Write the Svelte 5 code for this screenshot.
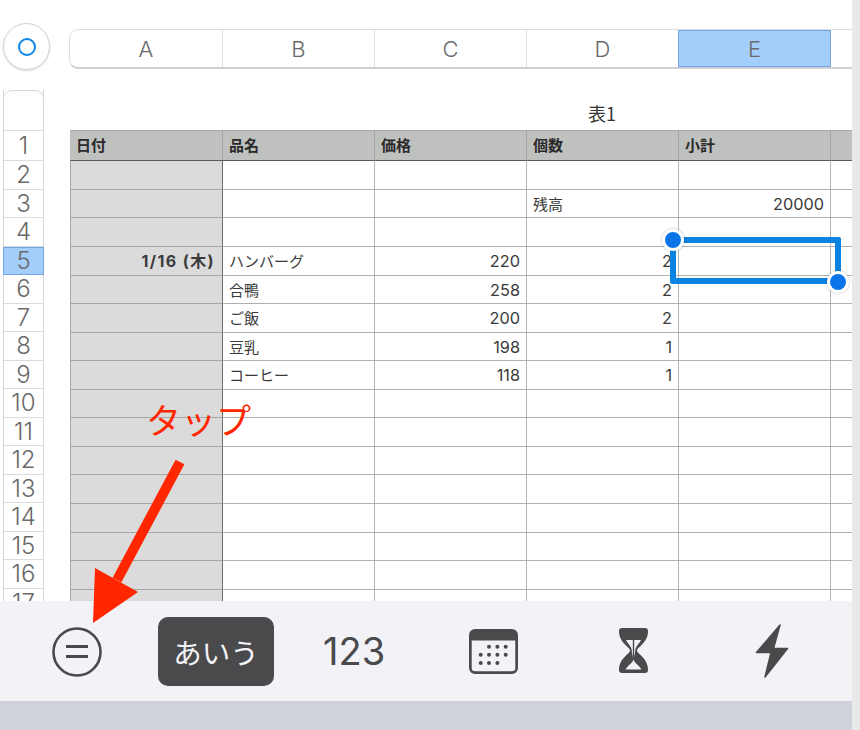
<script>
  const columns = ['A', 'B', 'C', 'D', 'E']
  const heads = ['日付', '品名', '価格', '個数', '小計', '']
  const rowNumbers = Array.from({ length: 17 }, (_, i) => i + 1)

  // filled rows of the sheet, row number -> cells
  const filled = {
    3: ['', '', '', '残高', '20000', ''],
    5: ['1/16 (木)', 'ハンバーグ', '220', '2', '', ''],
    6: ['', '合鴨', '258', '2', '', ''],
    7: ['', 'ご飯', '200', '2', '', ''],
    8: ['', '豆乳', '198', '1', '', ''],
    9: ['', 'コーヒー', '118', '1', '', '']
  }
  const bodyRows = rowNumbers.slice(1).map((n) => filled[n] ?? ['', '', '', '', '', ''])
  const isNum = (v) => /^[\d/]/.test(v)

  const calDots = [
    [20, 17.7], [28.4, 17.7], [36.7, 17.7],
    [11.7, 25.7], [20, 25.7], [28.4, 25.7], [36.7, 25.7],
    [11.7, 34], [20, 34], [28.4, 34]
  ]
</script>

<div class="page">
  <div class="screen">
    <div class="sheet-area">
      <div class="top">
        <div class="corner"><span class="ring"></span></div>
        <div class="col-heads">
          {#each columns as c, i}
            <div class="col-head" class:active={i === 4}>{c}</div>
          {/each}
        </div>
      </div>

      <div class="sheet">
        <div class="gutter">
          <div class="gutter-top"></div>
          {#each rowNumbers as n}
            <div class="row-no" class:active={n === 5}>{n}</div>
          {/each}
        </div>

        <div class="table-wrap">
          <div class="title">表1</div>
          <div class="grid head-row">
            {#each heads as h}
              <div class="cell head">{h}</div>
            {/each}
          </div>
          {#each bodyRows as row, r}
            <div class="grid" class:under-head={r === 0}>
              {#each row as v, i}
                <div class="cell" class:first={i === 0} class:num={isNum(v)}>{v}</div>
              {/each}
            </div>
          {/each}

          <div class="selection">
            <span class="knob tl"></span>
            <span class="knob br"></span>
          </div>
        </div>
      </div>
    </div>

    <div class="toolbar">
      <svg class="tool eq" width="50" height="50" viewBox="0 0 50 50" fill="none" stroke="#4a4a4c">
        <circle cx="25" cy="25" r="23.5" stroke-width="2.6" />
        <path d="M14 19.5h22M14 29.5h22" stroke-width="2.8" />
      </svg>
      <div class="kana">あいう</div>
      <div class="digits">123</div>
      <svg class="tool cal" width="49" height="45" viewBox="0 0 49 45" fill="#4a4a4c">
        <path fill-rule="evenodd" d="M6 0h37a6 6 0 0 1 6 6v33a6 6 0 0 1-6 6H6a6 6 0 0 1-6-6V6a6 6 0 0 1 6-6ZM2.700 11.500V39A3.300 3.300 0 0 0 6 42.300h37a3.300 3.300 0 0 0 3.300-3.300V11.500Z" />
        {#each calDots as [x, y]}
          <circle cx={x} cy={y} r="2" />
        {/each}
      </svg>
      <svg class="tool glass" width="29" height="45" viewBox="0 0 29 45" fill="#4a4a4c">
        <path fill-rule="evenodd" d="M3 0H26C28 0 29 1 29 3C29 9 26.500 13 22.500 17C19.500 20 18 21 18 22.500C18 24 19.500 25 22.500 28C26.500 32 29 36 29 42C29 44 28 45 26 45H3C1 45 0 44 0 42C0 36 2.500 32 6.500 28C9.500 25 11 24 11 22.500C11 21 9.500 20 6.500 17C2.500 13 0 9 0 3C0 1 1 0 3 0ZM7 12C8.500 15 12.800 19 12.800 22.500C12.800 25 13.500 27 13.800 30V12ZM22 12C20.500 15 16.200 19 16.200 22.500C16.200 25 15.500 27 15.200 30V12ZM14.500 31C14 35 9 37 6.500 41.500H22.500C20 37 15 35 14.500 31Z" />
      </svg>
      <svg class="tool bolt" width="34" height="54" viewBox="0 0 34 54" fill="#4a4a4c" stroke="#4a4a4c" stroke-width="1.500" stroke-linejoin="round">
        <path d="M25 1L1.500 28.500H16L10 53L32.500 24.500H18.500Z" />
      </svg>
    </div>
    <div class="keyboard-edge"></div>

    <div class="note">タップ</div>
    <svg class="arrow" width="100" height="170" viewBox="0 0 100 170">
      <path d="M90 2L27 120" stroke="#ff2600" stroke-width="10" fill="none" />
      <path d="M3 163L5 108L48 132Z" fill="#ff2600" />
    </svg>
  </div>
  <div class="edge"></div>
</div>

<style>
  :global(body) {
    margin: 0;
    background: #fff;
  }

  .page {
    display: flex;
    width: 860px;
    height: 730px;
    overflow: hidden;
    font-family: "Noto Sans CJK JP", "Liberation Sans", sans-serif;
  }
  .screen {
    position: relative;
    display: flex;
    flex-direction: column;
    width: 852px;
    flex-shrink: 0;
  }
  .edge {
    flex: 1;
    background: #e8e9e9;
  }

  /* ── Sheet ── */
  .sheet-area {
    height: 601px;
    overflow: hidden;
    background: #fff;
    flex-shrink: 0;
  }
  .top {
    display: flex;
    padding: 23px 0 0 3px;
    gap: 20px;
  }
  .corner {
    display: flex;
    align-items: center;
    justify-content: center;
    width: 45px;
    height: 45px;
    border: 1px solid #d0d0d0;
    border-radius: 50%;
    box-shadow: 0 1px 2px rgba(0, 0, 0, .16);
    flex-shrink: 0;
  }
  .ring {
    width: 14px;
    height: 14px;
    border: 2px solid #0a84e8;
    border-radius: 50%;
  }
  .col-heads {
    display: flex;
    flex: 1;
    height: 37px;
    margin-top: 6px;
    margin-left: -1px;
    border: 1px solid #dcdcdc;
    border-right: 0;
    border-bottom: 2px solid #d0d0d0;
    border-radius: 9px 0 0 9px;
    overflow: hidden;
  }
  .col-head {
    display: flex;
    align-items: center;
    justify-content: center;
    width: 152px;
    box-sizing: border-box;
    border-right: 1px solid #dcdcdc;
    color: #6a6a6a;
    font-family: Inter, "Liberation Sans", sans-serif;
    font-size: 22px;
    font-weight: 350;
    flex-shrink: 0;
  }
  .col-head:first-child {
    width: 153px;
  }
  .col-head.active {
    width: 153px;
    margin-left: -1px;
    background: #a3cdfb;
    border: 1px solid #74a6e4;
  }

  .sheet {
    display: flex;
    margin-top: 20px;
    padding-left: 3px;
  }
  .gutter {
    width: 41px;
    box-sizing: border-box;
    flex-shrink: 0;
    border: 1px solid #d6d6d6;
    border-top: 0;
    border-bottom: 0;
  }
  .gutter-top {
    height: 41px;
    margin: 0 -1px;
    border: 1px solid #d6d6d6;
    border-bottom: 1px solid #dcdcdc;
    border-radius: 9px 9px 0 0;
    box-sizing: border-box;
  }
  .row-no {
    display: flex;
    align-items: center;
    justify-content: center;
    height: 28.5px;
    box-sizing: border-box;
    border-bottom: 1px solid #dcdcdc;
    color: #6a6a6a;
    font-family: Inter, "Liberation Sans", sans-serif;
    font-size: 24px;
    font-weight: 350;
  }
  .row-no:nth-child(2) {
    height: 30px;
  }
  .row-no.active {
    background: #a3cdfb;
    margin: 0 -1px;
    border: 1px solid #74a6e4;
  }

  .table-wrap {
    position: relative;
    margin-left: 26px;
    width: 791px;
    flex-shrink: 0;
  }
  .title {
    height: 40px;
    box-sizing: border-box;
    padding-left: 456px;
    width: 608px;
    text-align: center;
    color: #333;
    font-size: 18px;
    line-height: 46px;
  }
  .grid {
    display: grid;
    grid-template-columns: 153px 152px 152px 152px 152px 152px;
    height: 28.55px;
  }
  .cell {
    box-sizing: border-box;
    padding: 0 6px;
    border-right: 1px solid #b4b4b4;
    border-top: 1px solid #b0b0b0;
    color: #3a3a3a;
    font-size: 15px;
    line-height: 27px;
    white-space: nowrap;
  }
  .under-head .cell {
    border-top-color: #5b5b5b;
  }
  .cell.first {
    background: #dbdbdb;
    border-left: 1px solid #a8a8a8;
    border-top-color: #a6a6a6;
    border-right: 1px solid #6b6b6b;
    font-weight: 700;
    text-align: right;
    padding-right: 7px;
  }
  .under-head .cell.first {
    border-top-color: #5b5b5b;
  }
  .cell.num {
    text-align: right;
    font-family: Inter, "Liberation Sans", sans-serif;
    font-size: 16.300px;
    line-height: 28px;
    padding-right: 6px;
  }
  .cell.first.num {
    font-family: Inter, "Noto Sans CJK JP", sans-serif;
    font-size: 16px;
    letter-spacing: 1.400px;
    padding-right: 7px;
  }
  .head-row {
    height: 30.400px;
  }
  .cell.head {
    background: #bfc1bf;
    border-top: 1px solid #a9a9a9;
    border-right: 1px solid #a5a7a5;
    font-weight: 700;
    color: #2a2a2a;
    line-height: 28px;
  }

  /* selected cell, lies over the table */
  .selection {
    position: absolute;
    left: 599.500px;
    top: 147px;
    width: 171px;
    height: 47px;
    box-sizing: border-box;
    border: 6px solid #0a84e0;
    border-radius: 2px;
  }
  .knob {
    position: absolute;
    width: 16px;
    height: 16px;
    border-radius: 50%;
    background: #0a74e8;
    border: 3px solid #fff;
    box-shadow: 0 0 3px rgba(0, 0, 0, .25);
  }
  .knob.tl { left: -14px; top: -14px; }
  .knob.br { right: -14px; bottom: -15px; }

  /* ── Toolbar ── */
  .toolbar {
    display: flex;
    align-items: center;
    height: 100px;
    flex-shrink: 0;
    background: #f2f2f7;
    position: relative;
  }
  .keyboard-edge {
    flex: 1;
    background: #cfd2da;
  }
  .tool {
    position: absolute;
  }
  .eq { left: 52px; top: 26px; }
  .cal { left: 469px; top: 28px; }
  .glass { left: 619px; top: 27px; }
  .bolt { left: 755px; top: 23px; }
  .kana {
    position: absolute;
    left: 158px;
    top: 15.500px;
    display: flex;
    align-items: center;
    justify-content: center;
    width: 116px;
    height: 69px;
    border-radius: 10px;
    background: #4a4a4c;
    color: #f2f2f7;
    font-size: 28.500px;
  }
  .digits {
    position: absolute;
    left: 323px;
    top: 28px;
    color: #4a4a4c;
    font-family: Inter, "Liberation Sans", sans-serif;
    font-size: 38px;
    line-height: 44px;
  }

  /* ── Red annotation ── */
  .note {
    position: absolute;
    left: 146px;
    top: 396px;
    color: #ff2600;
    font-size: 35px;
    line-height: 46px;
    white-space: nowrap;
  }
  .arrow {
    position: absolute;
    left: 90px;
    top: 460px;
    overflow: visible;
  }
</style>
